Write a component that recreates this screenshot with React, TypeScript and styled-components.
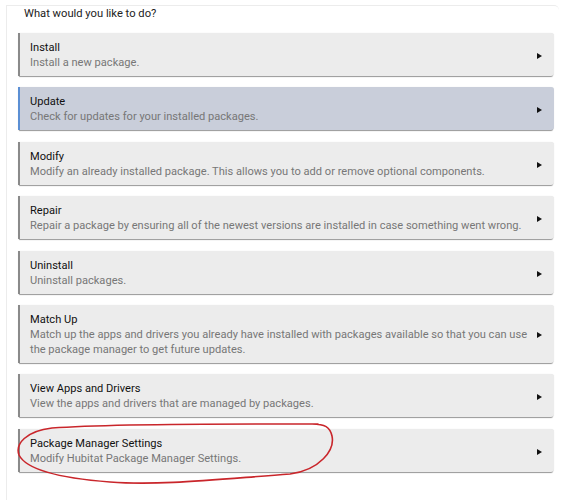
import React from "react";
import styled, { createGlobalStyle } from "styled-components";

const Global = createGlobalStyle`
  html, body { margin: 0; padding: 0; background: #fff; }
  body { font-family: Roboto, "Liberation Sans", Arial, sans-serif; }
`;

const Page = styled.div`
  position: relative;
  width: 563px;
  height: 500px;
  overflow: hidden;
  background: #fff;
`;

const Panel = styled.div`
  margin: 5px 4px 0 6px;
  border-top: 1px solid #ececec;
  border-left: 1px solid #ececec;
  border-top-right-radius: 5px;
  padding: 0 5px 0 11px;
  height: 495px;
  box-sizing: border-box;
`;

const Heading = styled.div`
  font-size: 11.2px;
  color: #222;
  line-height: 15px;
  padding-left: 6px;
  margin-bottom: 12px;
`;

const List = styled.div`
  display: flex;
  flex-direction: column;
  gap: 11.4px;
`;

const Card = styled.div<{ $active?: boolean }>`
  display: flex;
  align-items: center;
  background: ${(p) => (p.$active ? "#c9ceda" : "#ececec")};
  border-left: 2px solid ${(p) => (p.$active ? "#5b8fd4" : "#8a8a8a")};
  border-radius: 0 3px 3px 0;
  box-shadow: 0 2px 1px -1px rgba(0, 0, 0, 0.4), 0 0 1px rgba(0, 0, 0, 0.12);
  padding: 7px 12px 6px 10px;
  min-height: 30px;
`;

const Body = styled.div`
  flex: 1;
  display: flex;
  flex-direction: column;
`;

const Title = styled.div`
  font-size: 11.1px;
  line-height: 15px;
  color: #111;
`;

const Desc = styled.div`
  font-size: 11.1px;
  line-height: 15px;
  color: #777;
`;

const Arrow = styled.span`
  flex: none;
  width: 0;
  height: 0;
  border-top: 3.5px solid transparent;
  border-bottom: 3.5px solid transparent;
  border-left: 5px solid #111;
  margin-left: 4px;
  margin-top: 2px;
`;

const Annotation = styled.svg`
  position: absolute;
  left: 0;
  top: 0;
  pointer-events: none;
`;

const items = [
  { t: "Install", d: "Install a new package." },
  { t: "Update", d: "Check for updates for your installed packages.", active: true },
  { t: "Modify", d: "Modify an already installed package. This allows you to add or remove optional components." },
  { t: "Repair", d: "Repair a package by ensuring all of the newest versions are installed in case something went wrong." },
  { t: "Uninstall", d: "Uninstall packages." },
  {
    t: "Match Up",
    d: "Match up the apps and drivers you already have installed with packages available so that you can use the package manager to get future updates.",
  },
  { t: "View Apps and Drivers", d: "View the apps and drivers that are managed by packages." },
  { t: "Package Manager Settings", d: "Modify Hubitat Package Manager Settings." },
];

export default function App() {
  return (
    <Page>
      <Global />
      <Panel>
        <Heading>What would you like to do?</Heading>
        <List>
          {items.map((it) => (
            <Card key={it.t} $active={it.active}>
              <Body>
                <Title>{it.t}</Title>
                <Desc>{it.d}</Desc>
              </Body>
              <Arrow />
            </Card>
          ))}
        </List>
      </Panel>
      <Annotation width="563" height="500" viewBox="0 0 563 500">
        <path
          d="M 318 424 C 270 424, 120 423, 52 428 C 26 431, 15 444, 19 455 C 26 469, 58 478, 110 482 C 160 486, 220 479, 290 474 C 320 470, 335 450, 332 436 C 330 427, 325 424, 312 424"
          fill="none"
          stroke="#c9262b"
          strokeWidth="1.6"
          strokeLinecap="round"
        />
      </Annotation>
    </Page>
  );
}
